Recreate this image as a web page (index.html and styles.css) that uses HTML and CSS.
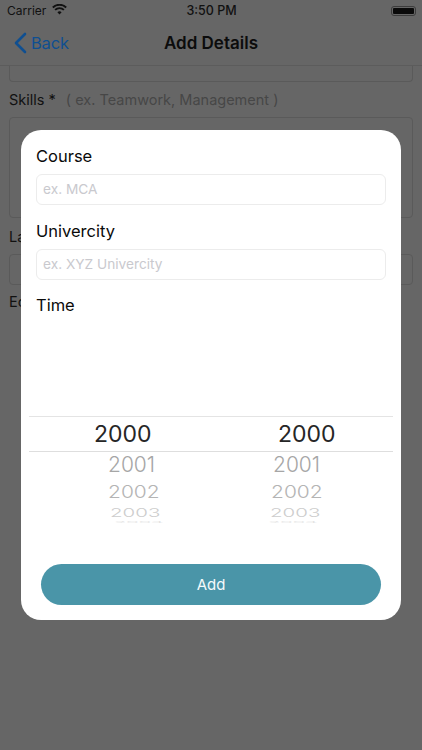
FILE: index.html
```html
<!DOCTYPE html>
<html lang="en">
<head>
<meta charset="utf-8">
<title>Add Details</title>
<link rel="stylesheet" href="styles.css">
</head>
<body>
<div class="screen">
  <div class="status">
    <div class="status-left">
      <span>Carrier</span>
      <svg class="wifi" width="15" height="11" viewBox="0 0 16 12"><path d="M8 11.500 5.700 8.900a3.300 3.300 0 0 1 4.600 0zM3.900 7.200 2.500 5.600a8 8 0 0 1 11 0l-1.400 1.600a5.900 5.900 0 0 0-8.200 0zM1.400 4.500 0 3a11.600 11.600 0 0 1 16 0l-1.400 1.500a9.600 9.600 0 0 0-13.200 0z" fill="#111"/></svg>
    </div>
    <span class="clock">3:50 PM</span>
    <div class="battery"><span class="battery-fill"></span></div>
  </div>
  <div class="nav">
    <div class="back">
      <svg width="14" height="22" viewBox="0 0 14 22"><path d="M12 2 3 11l9 9" fill="none" stroke="#0f4f91" stroke-width="2.600" stroke-linecap="round" stroke-linejoin="round"/></svg>
      <span>Back</span>
    </div>
    <div class="title">Add Details</div>
  </div>
  <div class="form">
    <div class="stub"></div>
    <div class="label skills"><span>Skills *</span><span class="hint">( ex. Teamwork, Management )</span></div>
    <div class="textarea"></div>
    <div class="label lang">La</div>
    <div class="field"></div>
    <div class="label edu">Ed</div>
  </div>

  <div class="scrim">
    <div class="modal">
      <div class="m-label">Course</div>
      <div class="m-input">ex. MCA</div>
      <div class="m-label second">Univercity</div>
      <div class="m-input">ex. XYZ Univercity</div>
      <div class="m-label third">Time</div>
      <div class="picker">
        <div class="selected"><span>2000</span><span>2000</span></div>
        <div class="wheel">
          <div class="wheel-row r1"><span>2001</span><span>2001</span></div>
          <div class="wheel-row r2"><span>2002</span><span>2002</span></div>
          <div class="wheel-row r3"><span>2003</span><span>2003</span></div>
          <div class="wheel-row r4"><span>2004</span><span>2004</span></div>
        </div>
      </div>
      <div class="add">Add</div>
    </div>
  </div>
</div>
</body>
</html>
```
FILE: styles.css
```css
* { box-sizing: border-box; }
html, body { margin: 0; padding: 0; }
body { font-family: Inter, "Liberation Sans", sans-serif; background: #666; }
.screen { position: relative; width: 422px; height: 750px; overflow: hidden; background: #666; color: #0c0c0c; }

.status { height: 20px; padding: 1px 6px 0 7px; display: grid; grid-template-columns: 1fr auto 1fr; align-items: center; font-size: 12px; color: #111; }
.status-left { display: flex; align-items: center; gap: 6px; }
.wifi { display: block; margin-top: -2px; }
.clock { font-weight: 500; font-size: 12.500px; }
.battery { justify-self: end; width: 25px; height: 10px; border: 1px solid #3c3c3c; border-radius: 3px; padding: 1px; display: flex; }
.battery-fill { flex: 1; background: #0a0a0a; border-radius: 1px; }

.nav { height: 46px; border-bottom: 1px solid #5c5c5c; display: flex; align-items: center; position: relative; padding-left: 13px; }
.back { display: flex; align-items: center; gap: 4px; font-size: 16.500px; letter-spacing: -.2px; color: #0f4f91; }
.title { position: absolute; inset: 0; display: flex; align-items: center; justify-content: center; font-size: 17px; font-weight: 600; color: #0c0c0c; }

.form { padding: 0 9px; }
.stub { height: 16px; border: 1px solid #5a5a5a; border-top: 0; border-radius: 0 0 4px 4px; }
.label { font-size: 14.500px; line-height: 20px; color: #111; }
.skills { margin-top: 8px; display: flex; gap: 10px; }
.hint { color: #474747; font-size: 14.500px; }
.textarea { height: 101px; margin-top: 7px; border: 1px solid #5a5a5a; border-radius: 4px; }
.lang { margin-top: 9px; }
.field { height: 31px; margin-top: 7px; border: 1px solid #5a5a5a; border-radius: 4px; }
.edu { margin-top: 7px; }

.scrim { position: absolute; inset: 0; padding: 130px 21px 0; }
.modal { height: 490px; background: #fff; border-radius: 20px; padding: 15px 15px 0; display: flex; flex-direction: column; }
.m-label { font-size: 16.500px; line-height: 22px; color: #0a0a0a; }
.second { margin-top: 15px; }
.third { margin-top: 14px; }
.m-input { height: 31px; margin-top: 7px; border: 1px solid #ececec; border-radius: 6px; padding: 0 6px 2px; display: flex; align-items: center; font-size: 13.700px; color: #c9c9ce; }
.picker { margin: 100px -7px 0; }
.selected { height: 36px; border-top: 1px solid #e4e4e4; border-bottom: 1px solid #dedede; display: grid; grid-template-columns: 187px 1fr; font-size: 23px; line-height: 34px; color: #262626; }
.selected span:first-child { padding-left: 65px; }
.selected span:last-child { padding-left: 62px; }
.wheel { height: 72px; overflow: hidden; }
.wheel-row { display: grid; grid-template-columns: 187px 1fr; font-size: 21px; font-weight: 300; line-height: 24px; transform-origin: top; }
.r1 span:first-child { padding-left: 79px; }
.r1 span:last-child { padding-left: 57px; }
.r2 span:first-child { padding-left: 79px; }
.r2 span:last-child { padding-left: 55px; }
.r3 span:first-child { padding-left: 81px; }
.r3 span:last-child { padding-left: 54px; }
.r4 span:first-child { padding-left: 85px; }
.r4 span:last-child { padding-left: 52px; }
.r1 { color: #a6a6a6; transform: translateY(1px); }
.r2 { color: #b4b4b4; transform: translateY(7px) scaleY(.8); }
.r3 { color: #cdcdcd; font-size: 20.500px; transform: translateY(6px) scaleY(.6); }
.r4 { color: #e2e2e2; font-size: 20px; transform: translateY(-3px) scaleY(.12); }
.add { height: 41px; margin: 40px 5px 0; border-radius: 21px; background: #4a95a8; color: #f4fafb; display: flex; align-items: center; justify-content: center; font-size: 15px; }
```
